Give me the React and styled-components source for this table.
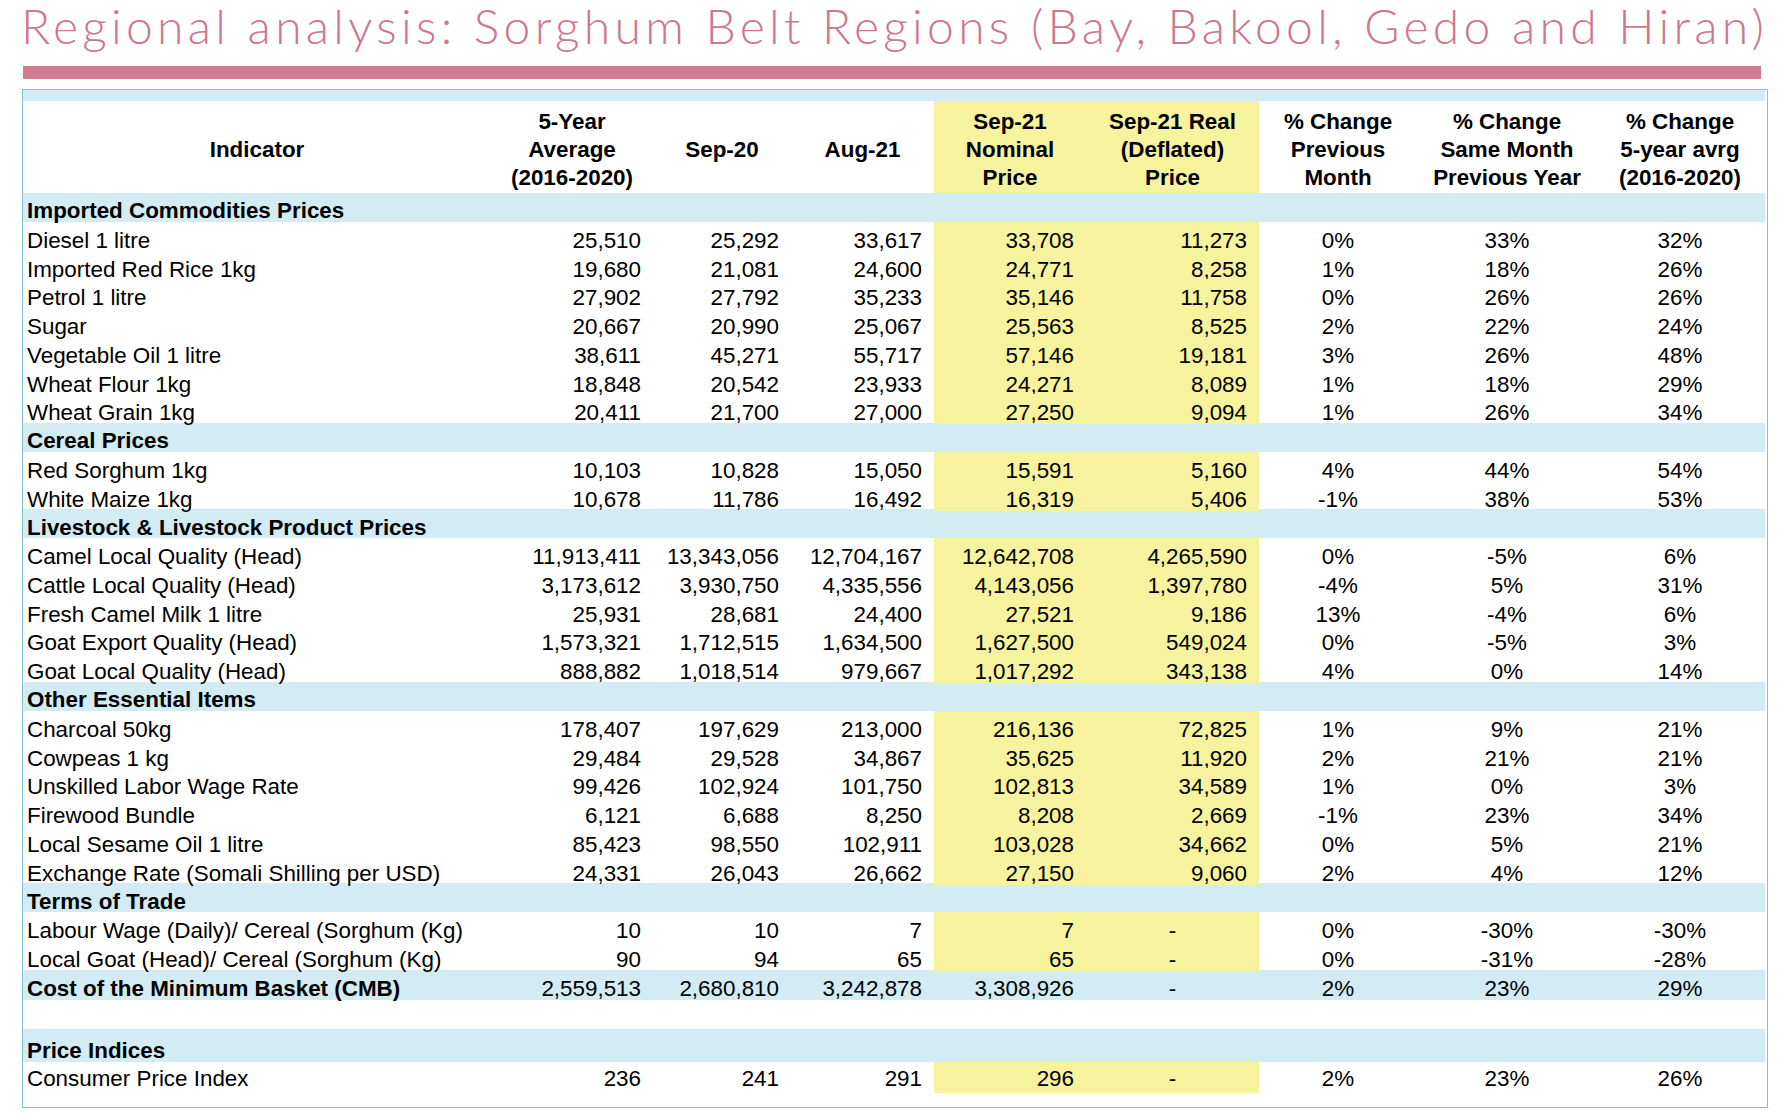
import React from 'react';
import styled, { createGlobalStyle } from 'styled-components';

const GlobalStyle = createGlobalStyle`
  html, body { margin: 0; padding: 0; background: #ffffff; }
  body { font-family: "Liberation Sans", Arial, sans-serif; color: #000; }
`;

const COLS = '468px 162px 138px 143px 152px 173px 158px 180px 166px';
const BLUE = '#d3ecf3';
const YELLOW = '#f7f29d';

const Page = styled.div`
  display: flex;
  flex-direction: column;
  width: 1789px;
`;

const Title = styled.h1`
  margin: 0;
  padding: 2px 0 0 21px;
  font-family: Lato, "Open Sans", sans-serif;
  font-weight: 300;
  font-size: 48px;
  line-height: 48px;
  letter-spacing: 4.3px;
  color: #cd7791;
  white-space: nowrap;
`;

const Rule = styled.div`
  margin: 16px 0 0 23px;
  width: 1738px;
  height: 13px;
  background: #d17c93;
`;

const TableBox = styled.div`
  display: block;
  margin: 10px 0 0 22px;
  border: 1px solid #80c5cc;
  padding: 0 2px 14px 0;
  box-sizing: content-box;
  width: 1742px;
`;

const TopStrip = styled.div`
  height: 11px;
  background: ${BLUE};
`;

const Row = styled.div`
  display: grid;
  grid-template-columns: ${COLS};
  height: ${(p) => p.$h}px;
  background: ${(p) => (p.$band ? BLUE : '#ffffff')};
  font-size: 22.4px;
`;

const HeadCell = styled.div`
  display: flex;
  align-items: center;
  justify-content: center;
  padding-top: 6px;
  text-align: center;
  font-weight: 700;
  line-height: 28px;
  background: ${(p) => (p.$hl ? YELLOW : 'transparent')};
`;

const SectionLabel = styled.div`
  grid-column: 1 / -1;
  padding: ${(p) => p.$pt}px 0 0 4px;
  line-height: 22px;
  font-weight: 700;
  white-space: nowrap;
`;

const Cell = styled.div`
  display: flex;
  align-items: flex-start;
  justify-content: ${(p) =>
    p.$align === 'left' ? 'flex-start' : p.$align === 'center' ? 'center' : 'flex-end'};
  padding: ${(p) => p.$pt}px ${(p) => (p.$align === 'right' ? '12px' : '0')} 0
    ${(p) => (p.$align === 'left' ? '4px' : '0')};
  line-height: 22px;
  font-weight: ${(p) => (p.$bold ? 700 : 400)};
  white-space: nowrap;
  background: ${(p) => (p.$hl && !p.$band ? YELLOW : 'transparent')};
`;

const ROW_H = 28.78;

const data = [
  { section: 'Imported Commodities Prices' },
  ['Diesel 1 litre', '25,510', '25,292', '33,617', '33,708', '11,273', '0%', '33%', '32%'],
  ['Imported Red Rice 1kg', '19,680', '21,081', '24,600', '24,771', '8,258', '1%', '18%', '26%'],
  ['Petrol 1 litre', '27,902', '27,792', '35,233', '35,146', '11,758', '0%', '26%', '26%'],
  ['Sugar', '20,667', '20,990', '25,067', '25,563', '8,525', '2%', '22%', '24%'],
  ['Vegetable Oil 1 litre', '38,611', '45,271', '55,717', '57,146', '19,181', '3%', '26%', '48%'],
  ['Wheat Flour 1kg', '18,848', '20,542', '23,933', '24,271', '8,089', '1%', '18%', '29%'],
  ['Wheat Grain 1kg', '20,411', '21,700', '27,000', '27,250', '9,094', '1%', '26%', '34%'],
  { section: 'Cereal Prices' },
  ['Red Sorghum 1kg', '10,103', '10,828', '15,050', '15,591', '5,160', '4%', '44%', '54%'],
  ['White Maize 1kg', '10,678', '11,786', '16,492', '16,319', '5,406', '-1%', '38%', '53%'],
  { section: 'Livestock & Livestock Product Prices' },
  ['Camel Local Quality (Head)', '11,913,411', '13,343,056', '12,704,167', '12,642,708', '4,265,590', '0%', '-5%', '6%'],
  ['Cattle Local Quality (Head)', '3,173,612', '3,930,750', '4,335,556', '4,143,056', '1,397,780', '-4%', '5%', '31%'],
  ['Fresh Camel Milk 1 litre', '25,931', '28,681', '24,400', '27,521', '9,186', '13%', '-4%', '6%'],
  ['Goat Export Quality (Head)', '1,573,321', '1,712,515', '1,634,500', '1,627,500', '549,024', '0%', '-5%', '3%'],
  ['Goat Local Quality (Head)', '888,882', '1,018,514', '979,667', '1,017,292', '343,138', '4%', '0%', '14%'],
  { section: 'Other Essential Items' },
  ['Charcoal 50kg', '178,407', '197,629', '213,000', '216,136', '72,825', '1%', '9%', '21%'],
  ['Cowpeas 1 kg', '29,484', '29,528', '34,867', '35,625', '11,920', '2%', '21%', '21%'],
  ['Unskilled Labor Wage Rate', '99,426', '102,924', '101,750', '102,813', '34,589', '1%', '0%', '3%'],
  ['Firewood Bundle', '6,121', '6,688', '8,250', '8,208', '2,669', '-1%', '23%', '34%'],
  ['Local Sesame Oil 1 litre', '85,423', '98,550', '102,911', '103,028', '34,662', '0%', '5%', '21%'],
  ['Exchange Rate (Somali Shilling per USD)', '24,331', '26,043', '26,662', '27,150', '9,060', '2%', '4%', '12%'],
  { section: 'Terms of Trade' },
  ['Labour Wage (Daily)/ Cereal (Sorghum (Kg)', '10', '10', '7', '7', '-', '0%', '-30%', '-30%'],
  ['Local Goat (Head)/ Cereal (Sorghum (Kg)', '90', '94', '65', '65', '-', '0%', '-31%', '-28%'],
];

const tail = [
  { row: ['Cost of the Minimum Basket (CMB)', '2,559,513', '2,680,810', '3,242,878', '3,308,926', '-', '2%', '23%', '29%'], band: true, bold: true, h: 30, pt: 8.6 },
  { blank: true, h: 29 },
  { section: 'Price Indices', h: 33, pt: 11 },
  { row: ['Consumer Price Index', '236', '241', '291', '296', '-', '2%', '23%', '26%'], h: 31, pt: 6.3 },
];

const align = (i, v) => {
  if (i === 0) return 'left';
  if (i >= 6) return 'center';
  if (v === '-') return 'center';
  return 'right';
};

const DataRow = ({ cells, band, bold, h, pt }) => (
  <Row $h={h} $band={band}>
    {cells.map((v, i) => (
      <Cell
        key={i}
        $align={align(i, v)}
        $hl={i === 4 || i === 5}
        $band={band}
        $bold={bold && i === 0}
        $pt={pt}
      >
        {v}
      </Cell>
    ))}
  </Row>
);

const Section = ({ label, h, pt }) => (
  <Row $h={h} $band>
    <SectionLabel $pt={pt}>{label}</SectionLabel>
  </Row>
);

const headers = [
  ['Indicator'],
  ['5-Year', 'Average', '(2016-2020)'],
  ['Sep-20'],
  ['Aug-21'],
  ['Sep-21', 'Nominal', 'Price'],
  ['Sep-21 Real', '(Deflated)', 'Price'],
  ['% Change', 'Previous', 'Month'],
  ['% Change', 'Same Month', 'Previous Year'],
  ['% Change', '5-year avrg', '(2016-2020)'],
];

export default function App() {
  return (
    <Page>
      <GlobalStyle />
      <Title>Regional analysis: Sorghum Belt Regions (Bay, Bakool, Gedo and Hiran)</Title>
      <Rule />
      <TableBox>
        <TopStrip />
        <Row $h={92}>
          {headers.map((lines, i) => (
            <HeadCell key={i} $hl={i === 4 || i === 5}>
              <span>
                {lines.map((l, j) => (
                  <React.Fragment key={j}>
                    {j > 0 && <br />}
                    {l}
                  </React.Fragment>
                ))}
              </span>
            </HeadCell>
          ))}
        </Row>
        {data.map((r, i) =>
          r.section ? (
            <Section key={i} label={r.section} h={ROW_H} pt={7.3} />
          ) : (
            <DataRow key={i} cells={r} h={ROW_H} pt={8} />
          )
        )}
        {tail.map((t, i) =>
          t.blank ? (
            <Row key={`t${i}`} $h={t.h} />
          ) : t.section ? (
            <Section key={`t${i}`} label={t.section} h={t.h} pt={t.pt} />
          ) : (
            <DataRow
              key={`t${i}`}
              cells={t.row}
              band={t.band}
              bold={t.bold}
              h={t.h}
              pt={t.pt}
            />
          )
        )}
      </TableBox>
    </Page>
  );
}
